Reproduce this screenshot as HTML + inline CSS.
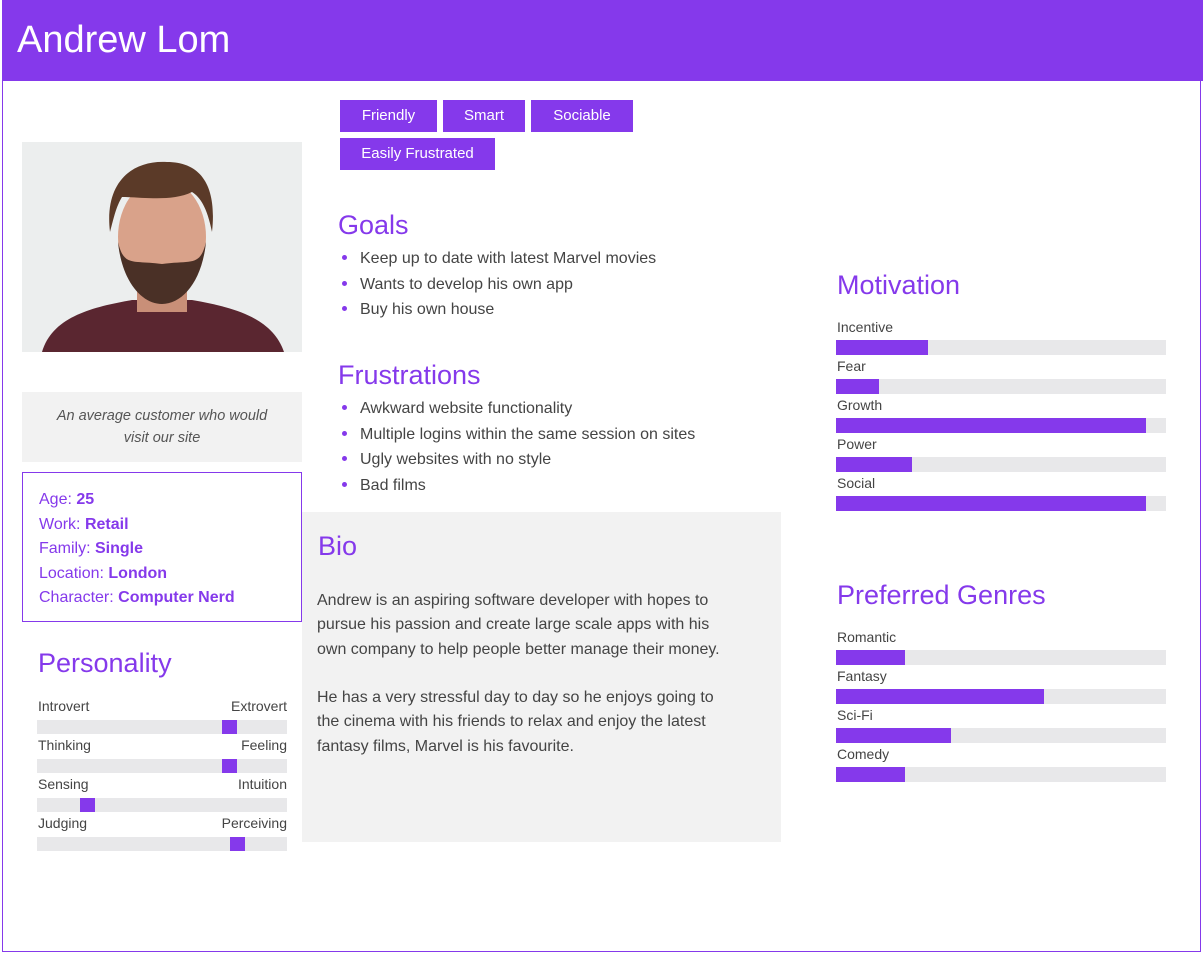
<!DOCTYPE html>
<html><head><style>
*{margin:0;padding:0;box-sizing:border-box}
body{width:1203px;height:953px;background:#fff;font-family:"Liberation Sans",sans-serif;position:relative;overflow:hidden;color:#444}
.a{position:absolute}
.frame{left:2px;top:0;width:1199px;height:952px;border:1px solid #8539eb}
.hdr{left:2px;top:0;width:1201px;height:81px;background:#8539eb;color:#fff;font-size:38px;padding:19px 0 0 15px}
.tag{background:#8539eb;color:#fff;font-size:15px;height:32px;line-height:31px;text-align:center}
h2{position:absolute;font-weight:normal;color:#8539eb;font-size:27px}
ul{position:absolute;list-style:none;font-size:16px;line-height:25.5px;color:#444}
ul li:before{content:"";display:inline-block;width:5px;height:5px;border-radius:50%;background:#8539eb;margin:0 13px 3px 4px}
.bar{position:absolute;height:15px;background:#e8e8ea}
.bar i{position:absolute;left:0;top:0;height:15px;background:#8539eb}
.lbl{position:absolute;font-size:14px;color:#444}
.r{text-align:right;width:150px}
.pb{position:absolute;left:37px;width:250px;height:14px;background:#e8e8ea}
.pb i{position:absolute;top:0;width:15px;height:14px;background:#8539eb}
.info{left:22px;top:472px;width:280px;height:150px;border:1px solid #8539eb;padding:15px 0 0 16px;font-size:16px;line-height:24.5px;color:#8539eb}
.info b{font-weight:bold}
</style></head><body>
<div class="a frame"></div>
<div class="a hdr">Andrew Lom</div>

<div class="a tag" style="left:340px;top:100px;width:97px">Friendly</div>
<div class="a tag" style="left:443px;top:100px;width:82px">Smart</div>
<div class="a tag" style="left:531px;top:100px;width:102px">Sociable</div>
<div class="a tag" style="left:340px;top:138px;width:155px">Easily Frustrated</div>

<svg class="a" style="left:22px;top:142px" width="280" height="210" viewBox="0 0 280 210">
<rect width="280" height="210" fill="#eceeee"/>
<path d="M20 210 C30 175 70 165 110 158 L170 158 C210 165 250 175 262 210Z" fill="#5a2630"/>
<rect x="115" y="130" width="50" height="40" fill="#c98f78"/>
<ellipse cx="140" cy="95" rx="44" ry="58" fill="#d9a28a"/>
<path d="M96 100 C100 140 120 162 140 162 C160 162 180 140 184 100 C178 125 170 118 140 122 C110 118 102 125 96 100Z" fill="#4a3026"/>
<path d="M88 90 C82 40 110 18 145 20 C180 20 195 45 190 90 C185 65 178 55 170 50 C150 60 120 55 100 55 C94 65 92 75 88 90Z" fill="#5b3a28"/>
</svg>

<div class="a" style="left:22px;top:392px;width:280px;height:70px;background:#f2f2f2;font-style:italic;font-size:14.5px;text-align:center;line-height:22px;padding-top:13px;color:#555">An average customer who would<br>visit our site</div>

<div class="a info">Age: <b>25</b><br>Work: <b>Retail</b><br>Family: <b>Single</b><br>Location: <b>London</b><br>Character: <b>Computer Nerd</b></div>

<h2 style="left:38px;top:648px">Personality</h2>
<div class="lbl" style="left:38px;top:698px">Introvert</div><div class="lbl r" style="left:137px;top:698px">Extrovert</div>
<div class="pb" style="top:720px"><i style="left:185px"></i></div>
<div class="lbl" style="left:38px;top:737px">Thinking</div><div class="lbl r" style="left:137px;top:737px">Feeling</div>
<div class="pb" style="top:759px"><i style="left:185px"></i></div>
<div class="lbl" style="left:38px;top:776px">Sensing</div><div class="lbl r" style="left:137px;top:776px">Intuition</div>
<div class="pb" style="top:798px"><i style="left:43px"></i></div>
<div class="lbl" style="left:38px;top:815px">Judging</div><div class="lbl r" style="left:137px;top:815px">Perceiving</div>
<div class="pb" style="top:837px"><i style="left:193px"></i></div>

<h2 style="left:338px;top:210px">Goals</h2>
<ul style="left:338px;top:246px"><li>Keep up to date with latest Marvel movies</li><li>Wants to develop his own app</li><li>Buy his own house</li></ul>
<h2 style="left:338px;top:360px">Frustrations</h2>
<ul style="left:338px;top:396px"><li>Awkward website functionality</li><li>Multiple logins within the same session on sites</li><li>Ugly websites with no style</li><li>Bad films</li></ul>

<div class="a" style="left:302px;top:512px;width:479px;height:330px;background:#f2f2f2"></div>
<h2 style="left:318px;top:531px">Bio</h2>
<div class="a" style="left:317px;top:589px;width:462px;font-size:16px;line-height:24.3px;color:#444;white-space:nowrap">Andrew is an aspiring software developer with hopes to<br>pursue his passion and create large scale apps with his<br>own company to help people better manage their money.<br><br>He has a very stressful day to day so he enjoys going to<br>the cinema with his friends to relax and enjoy the latest<br>fantasy films, Marvel is his favourite.</div>

<h2 style="left:837px;top:270px">Motivation</h2>
<div class="lbl" style="left:837px;top:319px">Incentive</div><div class="bar" style="left:836px;top:340px;width:330px"><i style="width:92px"></i></div>
<div class="lbl" style="left:837px;top:358px">Fear</div><div class="bar" style="left:836px;top:379px;width:330px"><i style="width:43px"></i></div>
<div class="lbl" style="left:837px;top:397px">Growth</div><div class="bar" style="left:836px;top:418px;width:330px"><i style="width:310px"></i></div>
<div class="lbl" style="left:837px;top:436px">Power</div><div class="bar" style="left:836px;top:457px;width:330px"><i style="width:76px"></i></div>
<div class="lbl" style="left:837px;top:475px">Social</div><div class="bar" style="left:836px;top:496px;width:330px"><i style="width:310px"></i></div>

<h2 style="left:837px;top:580px">Preferred Genres</h2>
<div class="lbl" style="left:837px;top:629px">Romantic</div><div class="bar" style="left:836px;top:650px;width:330px"><i style="width:69px"></i></div>
<div class="lbl" style="left:837px;top:668px">Fantasy</div><div class="bar" style="left:836px;top:689px;width:330px"><i style="width:208px"></i></div>
<div class="lbl" style="left:837px;top:707px">Sci-Fi</div><div class="bar" style="left:836px;top:728px;width:330px"><i style="width:115px"></i></div>
<div class="lbl" style="left:837px;top:746px">Comedy</div><div class="bar" style="left:836px;top:767px;width:330px"><i style="width:69px"></i></div>
</body></html>
